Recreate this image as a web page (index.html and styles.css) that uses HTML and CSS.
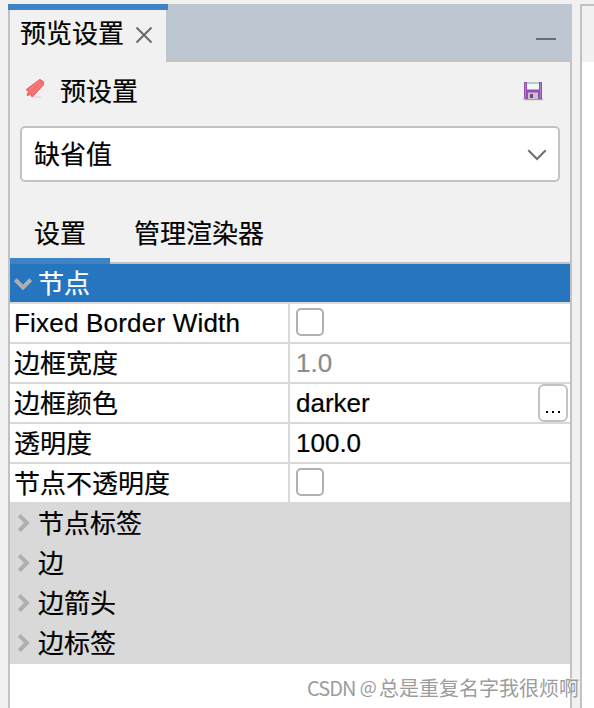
FILE: index.html
```html
<!DOCTYPE html>
<html lang="zh-CN">
<head>
<meta charset="utf-8">
<title>预览设置</title>
<link rel="stylesheet" href="styles.css">
</head>
<body>
<main class="workspace">
  <section class="panel">
    <header class="titlebar">
      <div class="doc-tab"><span>预览设置</span>
        <svg class="close" width="18" height="18" viewBox="0 0 18 18"><path d="M1.5 1.5 16.5 16.5M16.5 1.5 1.5 16.5" stroke="#6b6b6b" stroke-width="2" fill="none"/></svg>
      </div>
      <div class="titlebar-rest"><span class="minimize"></span></div>
    </header>
    <div class="content">
      <div class="preset">
        <svg class="preset-icon" width="24" height="24" viewBox="0 0 24 24">
          <ellipse cx="12" cy="20" rx="6" ry="1.2" fill="#000" opacity=".08"/>
          <path d="M15.8 2.4 19.4 4.6 19.4 8 8.2 20 7 17.6 3 18.4 4.4 14.8 2.2 12.6Z" fill="#f4706e" stroke="#ea5c5e" stroke-width="1" stroke-linejoin="round"/>
          <path d="M5.3 12.7 15.8 4M8.8 16.2 18 6.8" stroke="#fb9490" stroke-width="1" stroke-dasharray="2 1" fill="none"/>
        </svg>
        <span class="preset-name">预设置</span>
        <svg class="save" width="22" height="22" viewBox="0 0 22 22">
          <rect x=".5" y="18" width="21" height="2.4" rx="1" fill="#000" opacity=".12"/>
          <path d="M2 2H20V19.5H3.5L2 18Z" fill="#9450b0"/>
          <path d="M3.5 3V18M18.5 3V18" stroke="#b37bcc" stroke-width="1"/>
          <rect x="5" y="2" width="12" height="7.5" fill="#eef8f7"/>
          <rect x="5" y="2" width="12" height="2" fill="#b8cccd"/>
          <rect x="6" y="12.5" width="10" height="6.5" fill="#c9c4ca"/>
          <rect x="8" y="14" width="3" height="4" fill="#754086"/>
        </svg>
      </div>
      <div class="combo"><span>缺省值</span>
        <svg width="20" height="12" viewBox="0 0 20 12"><path d="M1.3 1.3 10 10 18.7 1.3" stroke="#6e6e6e" stroke-width="2" fill="none"/></svg>
      </div>
      <nav class="tabs"><div class="tab active">设置</div><div class="tab">管理渲染器</div></nav>
      <div class="sheet">
        <div class="group selected"><svg width="18" height="18" viewBox="0 0 18 18"><path d="M1.3 4.7 9 12.4 16.7 4.7" stroke="#afafaf" stroke-width="4" fill="none"/></svg><span>节点</span></div>
        <div class="row"><div class="key latin">Fixed Border Width</div><div class="value"><span class="check"></span></div></div>
        <div class="row"><div class="key">边框宽度</div><div class="value muted">1.0</div></div>
        <div class="row"><div class="key">边框颜色</div><div class="value">darker<span class="more"><i></i><i></i><i></i></span></div></div>
        <div class="row"><div class="key">透明度</div><div class="value">100.0</div></div>
        <div class="row last"><div class="key">节点不透明度</div><div class="value"><span class="check"></span></div></div>
        <div class="group"><svg width="18" height="18" viewBox="0 0 18 18"><path d="M5.2 1.3 12.9 9 5.2 16.7" stroke="#afafaf" stroke-width="4" fill="none"/></svg><span>节点标签</span></div>
        <div class="group"><svg width="18" height="18" viewBox="0 0 18 18"><path d="M5.2 1.3 12.9 9 5.2 16.7" stroke="#afafaf" stroke-width="4" fill="none"/></svg><span>边</span></div>
        <div class="group"><svg width="18" height="18" viewBox="0 0 18 18"><path d="M5.2 1.3 12.9 9 5.2 16.7" stroke="#afafaf" stroke-width="4" fill="none"/></svg><span>边箭头</span></div>
        <div class="group end"><svg width="18" height="18" viewBox="0 0 18 18"><path d="M5.2 1.3 12.9 9 5.2 16.7" stroke="#afafaf" stroke-width="4" fill="none"/></svg><span>边标签</span></div>
      </div>
    </div>
  </section>
  <aside class="neighbor"><div class="neighbor-head"></div></aside>
  <div class="watermark"><span>CSDN <b>@</b></span>总是重复名字我很烦啊</div>
</main>
</body>
</html>
```
FILE: styles.css
```css
* { box-sizing: border-box; }
body {
  margin: 0;
  background: #f1f1f1;
  color: #000;
  font: 26px/38px "Liberation Sans", "Noto Sans CJK SC", sans-serif;
  -webkit-text-stroke: .2px currentColor;
  overflow: hidden;
}
svg { display: block; flex: none; }
.workspace {
  position: relative;
  display: flex;
  gap: 8px;
  height: 708px;
  padding: 4px 0 0 8px;
}
.panel { display: flex; flex-direction: column; width: 564px; }
.titlebar { display: flex; height: 58px; background: #bdc7d1; }
.doc-tab {
  display: flex;
  align-items: center;
  width: 158px;
  background:
    linear-gradient(#c2c2c2, #c2c2c2) 0 6px / 2px 100% no-repeat #f1f1f1;
  padding: 6px 0 0 12px;
  position: relative;
}
.doc-tab::before {
  content: "";
  position: absolute;
  inset: 0 -2px auto 0;
  height: 6px;
  background: #3d83c6;
}
.doc-tab span { margin-top: -5px; }
.close { margin: -3px 0 0 11px; }
.titlebar-rest {
  flex: 1;
  display: flex;
  justify-content: flex-end;
  border-bottom: 2px solid #c2c2c2;
}
.minimize { width: 20px; height: 2px; margin: 34px 16px 0 0; background: #6b6b6b; }
.content {
  flex: 1;
  display: flex;
  flex-direction: column;
  border: solid #c2c2c2;
  border-width: 0 2px;
}
.preset { display: flex; align-items: center; height: 58px; padding: 0 26px 0 14px; }
.preset-icon { margin-top: -4px; }
.preset-name { margin: 2px auto 0 12px; }
.combo {
  display: flex;
  align-items: center;
  justify-content: space-between;
  height: 56px;
  margin: 6px 10px 0;
  padding: 0 11px 0 12px;
  border: 2px solid #c2c2c2;
  border-radius: 5px;
  background: #fff;
}
.combo span { padding-top: 2px; }
.combo svg { margin-top: 2px; }
.tabs { display: flex; height: 82px; padding-top: 20px; border-bottom: 2px solid #c2c2c2; }
.tab { height: 62px; padding: 13px 24px 0; }
.tab.active { width: 100px; border-bottom: 6px solid #3d83c6; }
.sheet { flex: 1; background: #fff; }
.group {
  display: flex;
  align-items: center;
  gap: 6px;
  height: 40px;
  padding-left: 4px;
  background: #d9d9d9;
}
.group svg { margin-top: 1px; }
.group span { padding-top: 3px; }
.group.end { height: 42px; padding-bottom: 2px; }
.group.selected { background: #2675bf; color: #fff; border-bottom: 2px solid #d9d9d9; }
.group.selected span { padding-top: 2px; }
.row { display: flex; height: 40px; border-bottom: 2px solid #d9d9d9; }
.row.last { height: 38px; border-bottom: 0; }
.key { width: 280px; padding: 1px 0 0 4px; border-right: 2px solid #d9d9d9; white-space: nowrap; }
.key.latin { padding-top: 0; letter-spacing: .2px; }
.value { flex: 1; display: flex; justify-content: space-between; padding: 0 2px 0 6px; }
.muted { color: #8c8c8c; }
.check { width: 28px; height: 28px; margin-top: 4px; border: 2px solid #b0b0b0; border-radius: 5px; }
.more {
  display: flex;
  justify-content: center;
  align-items: flex-end;
  gap: 4px;
  width: 30px;
  height: 38px;
  padding-bottom: 7px;
  border: 2px solid #c2c2c2;
  border-radius: 6px;
}
.more i { width: 2px; height: 2px; background: #000; }
.neighbor { flex: 1; border: solid #c2c2c2; border-width: 2px 0 0 2px; background: #fff; }
.neighbor-head { height: 56px; background: #f1f1f1; }
.watermark {
  position: absolute;
  left: 307px;
  top: 674px;
  font: 20px/28px "Noto Sans CJK SC", sans-serif;
  color: #9c9c9c;
  text-shadow: -1px -1px 0 rgba(255, 255, 255, .6);
  -webkit-text-stroke: 0;
  white-space: nowrap;
}
.watermark span { display: inline-block; width: 72px; letter-spacing: -1px; }
.watermark b { font-size: 18px; font-weight: 400; line-height: 1; margin-left: 1px; vertical-align: 2px; }
```
